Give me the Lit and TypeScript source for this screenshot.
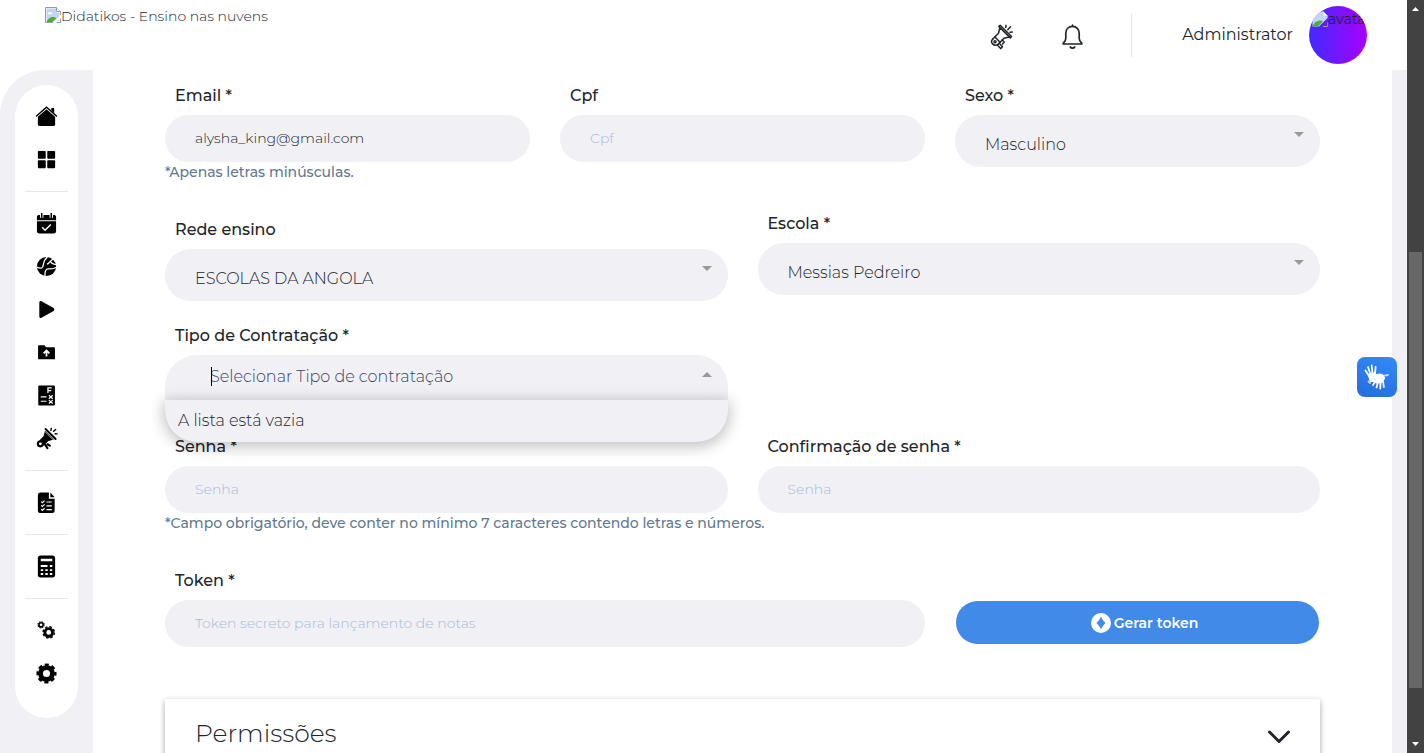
import { LitElement, html, css, svg } from "lit";
import { customElement, state } from "lit/decorators.js";

const sideIcons = {
  home: svg`<path d="M3 11 12 3.400l9 7.600V20a2 2 0 0 1-2 2H5a2 2 0 0 1-2-2z"/><path d="M1.4 11.600 12 2.400l10.600 9.200" fill="none" stroke="#fff" stroke-width="3"/><path d="M1.600 11.400 12 2.300 22.400 11.400" fill="none" stroke="currentColor" stroke-width="1.500" stroke-linecap="round"/><path d="M17 3h3v5.600l-3-2.600z"/>`,
  grid: svg`<rect x="3" y="3" width="8.200" height="8.200" rx="1"/><rect x="12.800" y="3" width="8.200" height="8.200" rx="1"/><rect x="3" y="12.800" width="8.200" height="8.200" rx="1"/><rect x="12.800" y="12.800" width="8.200" height="8.200" rx="1"/>`,
  calendar: svg`<path d="M4 3h16a2 2 0 0 1 2 2v3.500H2V5a2 2 0 0 1 2-2zM2 9.700h20V20a2.500 2.500 0 0 1-2.500 2.500h-15A2.500 2.500 0 0 1 2 20z"/><path d="M7 1v5M17 1v5" stroke="#fff" stroke-width="3.600"/><path d="M7 1v5M17 1v5" stroke="currentColor" stroke-width="1.600"/><path d="m7.500 16 3 3 6-6" fill="none" stroke="#fff" stroke-width="1.500"/>`,
  ball: svg`<circle cx="12" cy="12" r="10"/><path d="M2 12.500c2.500 1.500 5 1.500 6 0s0-6.500 5-10.500M10.500 22c-.5-5 1-8 4-7.500s5-.5 7.500-1.500M12.500 9.500c3-.5 3.500-5 7.500-5.500M16.500 7.500c1.500 2.500 3.500 1.500 5.500 2.500" fill="none" stroke="#fff" stroke-width="1.300"/>`,
  play: svg`<path d="M4.500 4.800c0-1.400 1.200-2 2.300-1.300l12.600 7c1.100.7 1.100 2.300 0 3l-12.600 7c-1.100.7-2.300.1-2.300-1.300z"/>`,
  folder: svg`<path d="M4 4.500h6l1.500 2h8A1.300 1.300 0 0 1 20.800 8v11H3.200V5.500a1 1 0 0 1 .8-1z"/><path d="M12 16.200v-5M9 13l3-3 3 3" fill="none" stroke="#fff" stroke-width="1.800"/>`,
  formula: svg`<rect x="3.400" y="1.500" width="17.400" height="21" rx="1.200"/><path d="M13.500 9.500V4h4M13.500 7h3.400M6 13.500h6M6 18h6M14.500 11.800l4 3.500M18.500 11.800l-4 3.500M14.500 16.800l4 3.600M18.500 16.800l-4 3.600" fill="none" stroke="#fff" stroke-width="1.300"/>`,
  horn: svg`<path d="M10.500 3.500 20 13l-6 1.700-5.500 5L4.500 14l4.500-4.500z"/><path d="m11 2 10.500 10.500" stroke="currentColor" stroke-width="2" stroke-linecap="round"/><path d="m9.500 3.800 10.200 10.200" stroke="#fff" stroke-width=".8"/><path d="m3.500 13.500 6 6" stroke="#fff" stroke-width=".8"/><circle cx="5.600" cy="17.600" r="2.600" fill="#fff" stroke="currentColor" stroke-width="2.200"/><path d="m10.500 18.500 2.500 3.500M13 18l2.500 1.500" stroke="currentColor" stroke-width="2.200" stroke-linecap="round"/><path d="M17 1.500 16.500 3.500M21.500 2.500l-2 2M23 7.200l-2-.2" stroke="currentColor" stroke-width="1.500" stroke-linecap="round"/>`,
  file: svg`<path d="M6 1.500h8.500V8h6v12.500a2.500 2.500 0 0 1-2.500 2.500H6a3 3 0 0 1-3-3V4.500a3 3 0 0 1 3-3zM16 1.500 20.500 6.500H16z"/><path d="M12 11.500h5.500M12 15.500h5.500M12 19.500h5.500M6.500 11l1.200 1.200L10 10M6.500 15l1.200 1.200L10 14M6.500 19l1.200 1.200L10 18" fill="none" stroke="#fff" stroke-width="1.200"/>`,
  calculator: svg`<rect x="3" y="0.500" width="18" height="23" rx="2.800"/><path d="M6 4h12v2.500H6zM6 10.500h7v2H6zM15.500 10.500h2.500v2h-2.500zM6 14.800h2.500v2H6zM10.800 14.800h2.500v2h-2.500zM15.500 14.800h2.500v2h-2.500zM6 18.800h2.500v2H6zM10.800 18.800h2.500v2h-2.500zM15.500 18.800h2.500v2h-2.500z" fill="#fff"/>`,
  cogs: svg`<circle cx="6.300" cy="6" r="2.200" fill="none" stroke="currentColor" stroke-width="1.600"/><circle cx="6.300" cy="6" r="3.200" fill="none" stroke="currentColor" stroke-width="1.200" stroke-dasharray="1.500 1.013"/><circle cx="14.300" cy="14" r="4" fill="none" stroke="currentColor" stroke-width="3"/><circle cx="14.300" cy="14" r="5.900" fill="none" stroke="currentColor" stroke-width="1.500" stroke-dasharray="2.700 1.934"/>`,
  cog: svg`<circle cx="12" cy="12" r="6.200" fill="none" stroke="currentColor" stroke-width="5"/><circle cx="12" cy="12" r="9.100" fill="none" stroke="currentColor" stroke-width="2.800" stroke-dasharray="4.200 2.947" stroke-dashoffset="2.100"/>`,
};

type IconName = keyof typeof sideIcons;

const sideGroups: { icon: IconName; label: string }[][] = [
  [
    { icon: "home", label: "Início" },
    { icon: "grid", label: "Painel" },
  ],
  [
    { icon: "calendar", label: "Agenda" },
    { icon: "ball", label: "Atividades" },
    { icon: "play", label: "Vídeos" },
    { icon: "folder", label: "Arquivos" },
    { icon: "formula", label: "Fórmulas" },
    { icon: "horn", label: "Comunicados" },
  ],
  [{ icon: "file", label: "Relatórios" }],
  [{ icon: "calculator", label: "Notas" }],
  [
    { icon: "cogs", label: "Parâmetros" },
    { icon: "cog", label: "Configurações" },
  ],
];

const missingPicture = html`<svg class="missing" viewBox="0 0 16 16" aria-hidden="true">
  <path d="M.5.5h11l4 4v11H.5z" fill="#fff" stroke="#9a9a9a" />
  <path d="M1.500 1.500h9.500v4h3.500v9h-13z" fill="#c3d5f7" />
  <path d="M3 6.500c0-1.500 2-2 2.500-.8 1.500-.6 2 .8 1.500 1.600H3z" fill="#fff" />
  <path d="M1.500 15c1-3.500 4.500-5.500 7.500-5l2.500 1L7.500 15z" fill="#4caf35" />
  <path d="M11.500.5v4h4" fill="#fff" stroke="#9a9a9a" />
  <path d="m7.500 16 8.500-8.500V11l-5 5z" fill="#fff" />
</svg>`;

const missingAvatar = html`<svg class="missing" viewBox="0 0 16 16" aria-hidden="true">
  <path d="M5 .5h6.500l4 4V7L7 15.500H.5V5z" fill="#c3d5f7" />
  <path d="M.5 15.500C2 11 5 9 9 9.500l2 1-5 5z" fill="#4caf35" />
  <path d="M11.500.5v4h4z" fill="#fff" />
  <path d="M4 .5h7.500l4 4V7M15.500 11.500v4H11" fill="none" stroke="#9a9a9a" />
</svg>`;

@customElement("app-root")
export class AppRoot extends LitElement {
  @state() private listOpen = true;

  static styles = css`
    :host {
      display: block;
      height: 100vh;
      overflow: hidden;
      background: #fff;
      color: #212529;
      font-family: Montserrat, Inter, "Open Sans", sans-serif;
      font-size: 16px;
      font-weight: 300;
      line-height: 24px;
    }
    * {
      box-sizing: border-box;
    }
    button,
    input,
    select {
      margin: 0;
      border: 0;
      outline: 0;
      font: inherit;
      color: inherit;
    }
    button {
      padding: 0;
      background: none;
      cursor: pointer;
    }
    .window {
      display: flex;
      height: 100%;
    }
    .page {
      flex: 1;
      min-width: 0;
      display: flex;
      flex-direction: column;
    }
    .header {
      flex: none;
      display: flex;
      justify-content: space-between;
      height: 70px;
      padding: 0 40px 0 45px;
    }
    .logo {
      display: flex;
      align-self: flex-start;
      align-items: center;
      padding-top: 4px;
      color: inherit;
      font-size: 14px;
      text-decoration: none;
    }
    .missing {
      flex: none;
      width: 16px;
      height: 16px;
      margin-bottom: 2px;
    }
    .tools {
      display: flex;
      align-items: center;
    }
    .tool {
      display: grid;
      place-items: center;
      width: 26px;
      height: 26px;
      margin: 3px 45px 0 0;
    }
    .tool svg {
      width: 26px;
      height: 26px;
    }
    .user {
      display: flex;
      align-items: center;
      gap: 16px;
      padding-left: 51px;
      font-weight: 400;
      background: linear-gradient(#e6e6ea, #e6e6ea) left center / 1px 43px no-repeat;
    }
    .avatar {
      display: flex;
      width: 58px;
      height: 58px;
      padding: 5px 3px;
      overflow: hidden;
      border-radius: 50%;
      font-size: 14px;
      line-height: 16px;
      background: linear-gradient(90deg, #3f2bff, #aa00ff);
    }
    .body {
      flex: 1;
      min-height: 0;
      display: flex;
      padding-right: 15px;
      background: #f0f0f5;
      border-top-left-radius: 45px;
    }
    .side {
      flex: none;
      width: 93px;
      padding: 15px;
    }
    .menu {
      width: 63px;
      padding: 10px 10px 23px;
      border-radius: 32px;
      background: #fff;
      color: #000;
    }
    .group + .group {
      margin-top: 10px;
      padding-top: 10px;
      border-top: 1px solid #e6e6ea;
    }
    .item {
      display: grid;
      place-items: center;
      height: 43px;
      color: inherit;
    }
    .item svg {
      width: 23px;
      height: 23px;
      fill: currentColor;
    }
    .main {
      flex: 1;
      min-width: 0;
      overflow: hidden;
      padding: 14px 72px 0;
      background: #fff;
    }
    .row {
      display: grid;
      column-gap: 30px;
      align-items: start;
    }
    .thirds {
      grid-template-columns: repeat(3, minmax(0, 1fr));
      margin-bottom: 30px;
    }
    .halves {
      grid-template-columns: repeat(2, minmax(0, 1fr));
      margin-bottom: 23px;
    }
    .halves.passwords {
      margin: 28px 0 36px;
    }
    .token {
      grid-template-columns: calc((200% - 30px) / 3) 1fr;
      align-items: end;
      margin-bottom: 52px;
    }
    .field {
      display: grid;
      grid-template-columns: minmax(0, 1fr);
      position: relative;
    }
    .lowered {
      margin-top: 6px;
    }
    .label {
      margin: 0 10px 7px;
      font-weight: 500;
    }
    .input,
    .select {
      width: 100%;
      height: 47px;
      padding: 0 30px 2px;
      border-radius: 24px;
      background: #f0f0f5;
      font-size: 14px;
    }
    .input::placeholder {
      color: #a9bbda;
      opacity: 1;
    }
    .box {
      display: grid;
    }
    .box > * {
      grid-area: 1 / 1;
    }
    .select {
      appearance: none;
      height: 52px;
      padding: 7px 30px 0;
      border-radius: 26px;
      font-size: 16px;
    }
    .combo {
      padding: 0 45px 10px;
    }
    .combo[aria-expanded="true"] {
      border-radius: 32px 32px 0 0;
    }
    .combo::placeholder {
      color: #39455c;
      opacity: 1;
    }
    .arrow {
      justify-self: end;
      width: 10px;
      height: 5px;
      margin: 17px 16px 0 0;
      fill: #999;
      pointer-events: none;
    }
    .caret {
      width: 1px;
      height: 19px;
      margin: 12px 0 0 46px;
      background: #000;
    }
    .list {
      position: absolute;
      z-index: 2;
      top: 76px;
      left: 0;
      right: 0;
      margin: 0;
      padding: 9px 13px;
      list-style: none;
      border-radius: 0 0 32px 32px;
      background: #f0f0f5;
      box-shadow: 0 3px 14px 2px rgba(0, 0, 0, 0.2), 0 3px 24px rgba(0, 0, 0, 0.06);
    }
    .hint {
      height: 20px;
      color: #62788f;
      font-size: 14px;
      font-weight: 500;
      line-height: 20px;
      white-space: nowrap;
    }
    .generate {
      display: flex;
      align-items: center;
      justify-content: center;
      gap: 3px;
      height: 43px;
      margin: 0 1px 3px;
      padding-left: 14px;
      border-radius: 22px;
      background: #418ae8;
      color: #fff;
      font-size: 14px;
      font-weight: 600;
    }
    .generate svg {
      width: 20px;
      height: 20px;
    }
    .permissions {
      display: flex;
      align-items: center;
      justify-content: space-between;
      width: 100%;
      padding: 19px 28px 20px 30px;
      background: #fff;
      box-shadow: 0 2px 6px rgba(0, 0, 0, 0.35);
      font-size: 25px;
      line-height: 30px;
    }
    .permissions svg {
      width: 26px;
      height: 16px;
      margin-top: 8px;
    }
    .signs {
      position: fixed;
      z-index: 3;
      top: 357px;
      right: 27px;
      width: 40px;
      height: 40px;
      border-radius: 8px;
      background: linear-gradient(200deg, #318cf8, #276bdc);
    }
    .signs svg {
      width: 40px;
      height: 40px;
    }
    .track {
      flex: none;
      display: flex;
      flex-direction: column;
      align-items: center;
      width: 17px;
      background: #424242;
    }
    .track svg {
      width: 7px;
      height: 4px;
      margin: 7px 0;
      fill: #fff;
    }
    .rail {
      flex: 1;
      display: grid;
      grid-template-rows: 234fr 437fr 47fr;
      width: 13px;
    }
    .thumb {
      grid-row: 2;
      background: #686868;
    }
  `;

  private arrow(up = false) {
    return html`<svg class="arrow" viewBox="0 0 10 5" aria-hidden="true">
      <path d=${up ? "M0 5 5 0l5 5z" : "M0 0h10L5 5z"} />
    </svg>`;
  }

  private input(id: string, label: string, placeholder: string, type = "text", value = "", hint = "") {
    return html`<div class="field">
      <label class="label" for=${id}>${label}</label>
      <input class="input" id=${id} type=${type} placeholder=${placeholder} .value=${value} autocomplete="off" />
      ${hint ? html`<div class="hint">${hint}</div>` : ""}
    </div>`;
  }

  private select(id: string, label: string, value: string, extra = "") {
    return html`<div class="field ${extra}">
      <label class="label" for=${id}>${label}</label>
      <div class="box">
        <select class="select" id=${id}>
          <option>${value}</option>
        </select>
        ${this.arrow()}
      </div>
    </div>`;
  }

  private toggleList() {
    this.listOpen = !this.listOpen;
  }

  private renderHeader() {
    return html`<header class="header">
      <a class="logo" href="#">${missingPicture}<span>Didatikos - Ensino nas nuvens</span></a>
      <div class="tools">
        <button class="tool" aria-label="Comunicados">
          <svg viewBox="0 0 26 26" fill="none" stroke="currentColor" stroke-width="1.500" stroke-linecap="round" stroke-linejoin="round">
            <path d="m9.800 2.400 1.400-1.200L22.500 12.500l-1.200 1.400zM10.800 4 9.500 9.300 3.800 15M20 13l-5 1.300-6 6" />
            <path d="M3.800 15c-1.600 1.700-1.400 3.700-.2 4.900s3.400 1.900 5.400.4M6 13l5 5.200M10.500 19.500l3 3.300-1.700 1.800-3.300-3.300M13 16l2.200 2-1.700 2" />
            <circle cx="6" cy="17.700" r="1" />
            <path d="M17 1.200 16.800 3.500M21.500 2.800l-2.700 3M23.300 8l-2.300.3" />
          </svg>
        </button>
        <button class="tool" aria-label="Notificações">
          <svg viewBox="0 0 26 26" fill="none" stroke="currentColor" stroke-width="1.700" stroke-linecap="round" stroke-linejoin="round">
            <path d="M12.500 2.300c-4 0-6.700 3-6.700 7v5c0 2.500-1.200 3.500-2.600 5v.7h18.600v-.7c-1.400-1.500-2.600-2.500-2.600-5v-5c0-4-2.700-7-6.700-7zM12.500 1v1M10.300 23c.8 1.600 3.600 1.600 4.400 0" />
          </svg>
        </button>
        <div class="user">
          <span>Administrator</span>
          <span class="avatar">${missingAvatar}avatar</span>
        </div>
      </div>
    </header>`;
  }

  private renderSide() {
    return html`<aside class="side">
      <nav class="menu">
        ${sideGroups.map(
          (group) => html`<div class="group">
            ${group.map(
              ({ icon, label }) => html`<a class="item" href="#" aria-label=${label}>
                <svg viewBox="0 0 24 24">${sideIcons[icon]}</svg>
              </a>`
            )}
          </div>`
        )}
      </nav>
    </aside>`;
  }

  private renderForm() {
    return html`<main class="main">
      <div class="row thirds">
        ${this.input("email", "Email *", "Email", "text", "alysha_king@gmail.com", "*Apenas letras minúsculas.")}
        ${this.input("cpf", "Cpf", "Cpf")} ${this.select("sexo", "Sexo *", "Masculino")}
      </div>
      <div class="row halves">
        ${this.select("rede", "Rede ensino", "ESCOLAS DA ANGOLA", "lowered")}
        ${this.select("escola", "Escola *", "Messias Pedreiro")}
      </div>
      <div class="row halves">
        <div class="field">
          <label class="label" for="contrato">Tipo de Contratação *</label>
          <div class="box">
            <input
              class="select combo"
              id="contrato"
              role="combobox"
              aria-expanded=${this.listOpen ? "true" : "false"}
              aria-controls="contratos"
              placeholder="Selecionar Tipo de contratação"
              @click=${this.toggleList}
            />
            <span class="caret"></span>
            ${this.arrow(this.listOpen)}
          </div>
          ${this.listOpen ? html`<ul class="list" id="contratos"><li>A lista está vazia</li></ul>` : ""}
        </div>
      </div>
      <div class="row halves passwords">
        ${this.input(
          "senha",
          "Senha *",
          "Senha",
          "password",
          "",
          "*Campo obrigatório, deve conter no mínimo 7 caracteres contendo letras e números."
        )}
        ${this.input("confirmacao", "Confirmação de senha *", "Senha", "password")}
      </div>
      <div class="row token">
        ${this.input("token", "Token *", "Token secreto para lançamento de notas")}
        <button class="generate">
          <svg viewBox="0 0 20 20" aria-hidden="true">
            <circle cx="10" cy="10" r="10" fill="#fff" />
            <path d="M10 3.500c1 2.500 2.500 4.500 4.500 6.500-2 2-3.500 4-4.500 6.500C9 14 7.500 12 5.500 10 7.500 8 9 6 10 3.500z" fill="#418ae8" />
          </svg>
          Gerar token
        </button>
      </div>
      <button class="permissions" aria-expanded="false">
        Permissões
        <svg viewBox="0 0 26 16" fill="none" stroke="currentColor" stroke-width="3" stroke-linecap="round" stroke-linejoin="round" aria-hidden="true">
          <path d="m3.500 3 9.500 9.500L22.500 3" />
        </svg>
      </button>
    </main>`;
  }

  render() {
    return html`<div class="window">
      <div class="page">
        ${this.renderHeader()}
        <div class="body">${this.renderSide()} ${this.renderForm()}</div>
      </div>
      <div class="track" aria-hidden="true">
        <svg viewBox="0 0 7 4"><path d="M0 4 3.500 0 7 4z" /></svg>
        <div class="rail"><div class="thumb"></div></div>
        <svg viewBox="0 0 7 4"><path d="M0 0h7L3.500 4z" /></svg>
      </div>
      <button class="signs" aria-label="Libras">
        <svg viewBox="0 0 40 40" fill="none" stroke="#fff" stroke-width="1.800" stroke-linecap="round" aria-hidden="true">
          <path d="m12 19-3.500-5.500M13.500 17.500 11 10M15.500 16.500l-.8-8M18 17l.6-7" />
          <path d="M12 18.500c1-2 5.500-3 6.500-1l-3 2 1 4.500h-3z" fill="#fff" />
          <path d="M18.500 18.500c2-2 6.500-2 8 0l1 3-3 4-5 .5-3-2 2-2-2-1.500z" fill="#fff" stroke-width="1.200" />
          <path d="m18.500 24-2.500 4M21 25l-1.500 5.500M23.500 25l-.2 6.500M26 24l.8 6" />
          <path d="m28 18.500 3-.5M11.500 24.500l1.500 1.500" opacity=".7" />
        </svg>
      </button>
    </div>`;
  }
}
